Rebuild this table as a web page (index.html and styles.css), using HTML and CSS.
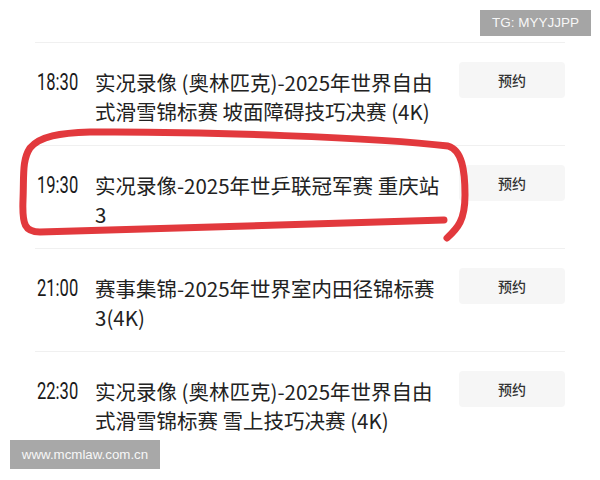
FILE: index.html
```html
<!DOCTYPE html>
<html lang="zh-CN">
<head>
<meta charset="utf-8">
<link rel="stylesheet" href="styles.css">
</head>
<body>
<div class="screen">
  <div class="tg">TG: MYYJJPP</div>
  <ul class="list">
    <li class="row">
      <span class="time"><span class="digits">18:30</span></span>
      <span class="title">实况录像 (奥林匹克)-2025年世界自由式滑雪锦标赛 坡面障碍技巧决赛 (4K)</span>
      <button class="btn">预约</button>
    </li>
    <li class="row">
      <span class="time"><span class="digits">19:30</span></span>
      <span class="title">实况录像-2025年世乒联冠军赛 重庆站3</span>
      <button class="btn">预约</button>
    </li>
    <li class="row">
      <span class="time"><span class="digits">21:00</span></span>
      <span class="title">赛事集锦-2025年世界室内田径锦标赛3(4K)</span>
      <button class="btn">预约</button>
    </li>
    <li class="row">
      <span class="time"><span class="digits">22:30</span></span>
      <span class="title">实况录像 (奥林匹克)-2025年世界自由式滑雪锦标赛 雪上技巧决赛 (4K)</span>
      <button class="btn">预约</button>
    </li>
  </ul>
  <svg class="scribble" width="600" height="480" viewBox="0 0 600 480">
    <path d="M444 220 C 350 222, 150 230, 40 232 C 25 232, 22 225, 23 200 C 24 175, 22 160, 30 148 C 40 136, 60 133, 90 132 C 200 131, 380 138, 448 146 C 462 150, 465 170, 465 195 C 465 220, 458 228, 447 238" fill="none" stroke="#e2393d" stroke-width="7" stroke-linecap="round" stroke-linejoin="round"/>
  </svg>
  <div class="site">www.mcmlaw.com.cn</div>
</div>
</body>
</html>
```
FILE: styles.css
```css
html, body {
  margin: 0;
  padding: 0;
  background: #ffffff;
}
.screen {
  position: relative;
  width: 600px;
  height: 480px;
  overflow: hidden;
  font-family: "Noto Sans CJK SC", "Liberation Sans", sans-serif;
  color: #1e1e1e;
}
.list {
  list-style: none;
  margin: 0;
  padding: 42px 35px 0 35px;
}
.row {
  display: flex;
  align-items: flex-start;
  border-top: 1px solid #f0f0f0;
  padding: 19px 0 19px 0;
}
.time {
  width: 58px;
  flex: none;
  padding-left: 2px;
  margin-top: 6px;
  font-family: Roboto, "Liberation Sans", sans-serif;
  font-size: 23px;
  line-height: 29px;
  color: #1a1a1a;
}
.digits {
  display: inline-block;
  transform: scaleX(0.72);
  transform-origin: left center;
}
.title {
  width: 352px;
  flex: none;
  margin-top: 6px;
  font-size: 20.5px;
  line-height: 29px;
  color: #222222;
}
.btn {
  margin-left: auto;
  width: 106px;
  height: 36px;
  border: none;
  border-radius: 4px;
  background: #f6f6f6;
  font-family: "Noto Sans CJK SC", sans-serif;
  font-size: 14px;
  font-weight: 500;
  color: #333333;
  padding: 0;
}
.tg {
  position: absolute;
  top: 10px;
  left: 480px;
  width: 111px;
  height: 26px;
  background: #a5a5a5;
  color: #f7f7f7;
  font-family: "Liberation Sans", sans-serif;
  font-size: 13.5px;
  line-height: 26px;
  text-align: center;
}
.site {
  position: absolute;
  top: 440px;
  left: 10px;
  width: 150px;
  height: 29px;
  background: #a8a8a8;
  color: #f7f7f7;
  font-family: "Liberation Sans", sans-serif;
  font-size: 13.3px;
  line-height: 29px;
  text-align: center;
}
.scribble {
  position: absolute;
  top: 0;
  left: 0;
}
```
